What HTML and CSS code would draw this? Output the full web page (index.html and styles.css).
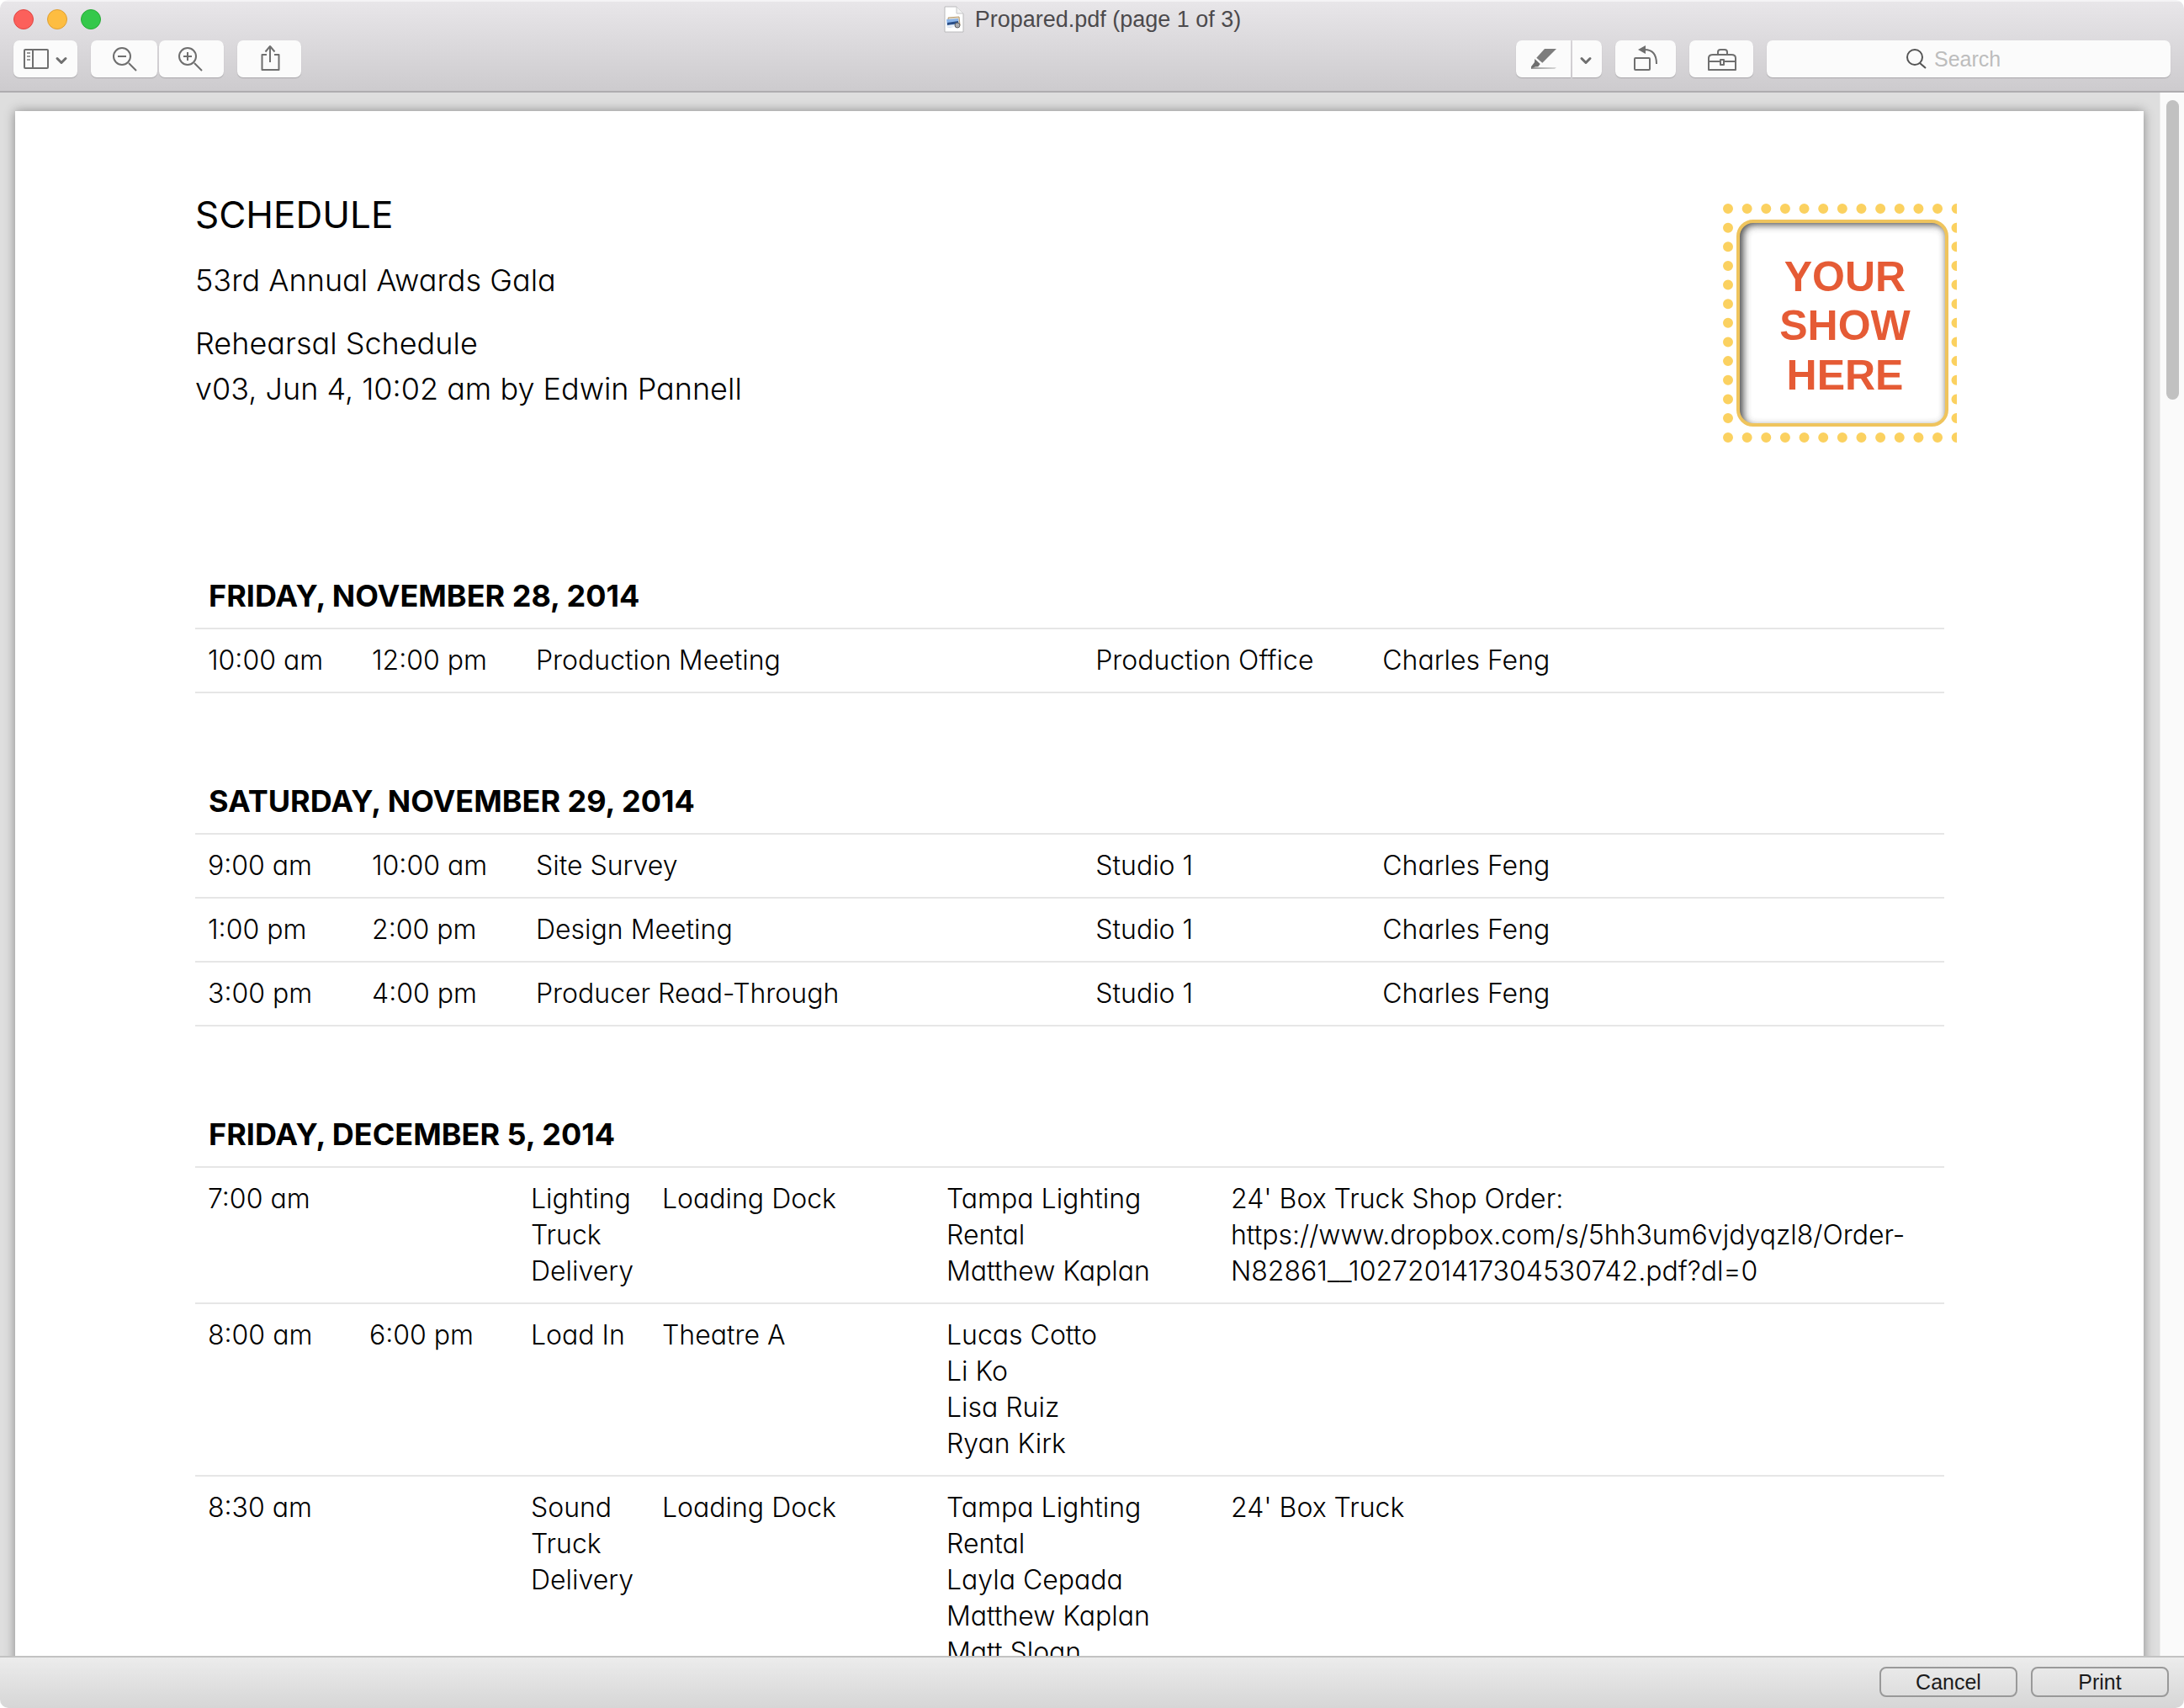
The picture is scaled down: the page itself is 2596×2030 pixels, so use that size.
FILE: index.html
```html
<!DOCTYPE html>
<html lang="en">
<head>
<meta charset="utf-8">
<title>Propared.pdf (page 1 of 3)</title>
<link rel="stylesheet" href="styles.css">
</head>
<body>
<div class="window">
  <header class="chrome">
    <div class="titlebar">
      <div class="lights">
        <button class="light light-close" aria-label="Close"></button>
        <button class="light light-minimize" aria-label="Minimize"></button>
        <button class="light light-zoom" aria-label="Zoom"></button>
      </div>
      <h1 class="title">
        <svg class="doc-icon" width="26" height="32" viewBox="0 0 26 32" aria-hidden="true">
          <path d="M2 1h14l8 8v22H2z" fill="#fff" stroke="#b9b9bb"/>
          <path d="M16 1v8h8" fill="#f3f3f3" stroke="#c4c4c6"/>
          <path d="M6 14l13-1 1 10-13 2z" fill="#e9dcc4" stroke="#b59a72"/>
          <path d="M4 16l14-1 1 9-14 2z" fill="#8ab4ea"/>
          <path d="M5 20l13-2v3l-13 2z" fill="#2a4d86"/>
          <path d="M5 23l9-1v3l-9 1z" fill="#e8eef5"/>
          <circle cx="17" cy="23" r="3" fill="#a9abb0" stroke="#5d5d60"/>
        </svg>
        <span>Propared.pdf (page 1 of 3)</span>
      </h1>
    </div>
    <div class="toolbar">
      <button class="tool" aria-label="View">
        <svg width="76" height="44" viewBox="0 0 76 44">
          <rect x="13" y="11" width="28" height="22" rx="1" class="line"/>
          <path d="M23 11v22" class="line"/>
          <path d="M16 15h4M16 19h4M16 23h4" class="line faint"/>
          <path d="M52 21.500l5 5 5-5" class="line heavy"/>
        </svg>
      </button>
      <div class="pair">
        <button class="tool" aria-label="Zoom out">
          <svg width="79" height="44" viewBox="0 0 79 44">
            <circle cx="37" cy="19" r="10" class="line"/>
            <path d="M32 19h10M45 27l9 9" class="line"/>
          </svg>
        </button>
        <button class="tool" aria-label="Zoom in">
          <svg width="77" height="44" viewBox="0 0 77 44">
            <circle cx="34" cy="19" r="10" class="line"/>
            <path d="M29 19h10M34 14v10M42 27l9 9" class="line"/>
          </svg>
        </button>
      </div>
      <button class="tool" aria-label="Share">
        <svg width="76" height="44" viewBox="0 0 76 44">
          <path d="M35 17h-5.500v18h20v-18h-5.500M39 26V8M33.500 13.500L39 7l5.500 6.500" class="line"/>
        </svg>
      </button>
      <div class="spacer"></div>
      <div class="split">
        <button class="tool" aria-label="Highlight">
          <svg width="65" height="44" viewBox="0 0 65 44">
            <defs><linearGradient id="fade"><stop offset="0" stop-color="#777"/><stop offset="1" stop-color="#ccc"/></linearGradient></defs>
            <path d="M34 10h14L31.300 26.700l-7-6z" fill="#7d7d7d"/>
            <path d="M22.300 22l6.400 6-2.400 3.300-3.600.2-4.700 2.200v-2.400l4-5.300z" fill="#6f6f6f"/>
            <path d="M18 32.300h30l-2 1.400H18z" fill="url(#fade)"/>
          </svg>
        </button>
        <button class="tool" aria-label="Highlight colours">
          <svg width="35" height="44" viewBox="0 0 35 44">
            <path d="M11 21.500l5 5 5-5" class="line heavy"/>
          </svg>
        </button>
      </div>
      <button class="tool" aria-label="Rotate left">
        <svg width="72" height="44" viewBox="0 0 72 44">
          <rect x="23" y="21" width="18" height="14" rx="1" class="line"/>
          <path d="M35 11c9 0 14 6 14 17" class="line"/>
          <path d="M36 6v10l-9-5z" fill="#6f6f6f"/>
        </svg>
      </button>
      <button class="tool" aria-label="Markup toolbox">
        <svg width="76" height="44" viewBox="0 0 76 44">
          <path d="M23 35V21q0-4 5-4h22q5 0 5 4v14zM34 17v-3q0-3 3-3h5q3 0 3 3v3M23 25h14M41 25h14M37 23h4v6h-4z" class="line"/>
        </svg>
      </button>
      <label class="search">
        <svg width="26" height="26" viewBox="0 0 26 26" aria-hidden="true">
          <circle cx="11" cy="11" r="9" class="line dark"/>
          <path d="M17 18l7 6" class="line dark"/>
        </svg>
        <input type="search" placeholder="Search" aria-label="Search">
      </label>
    </div>
  </header>

  <main class="viewer">
    <article class="sheet">
      <div class="masthead">
        <div class="intro">
          <h2 class="doc-title">SCHEDULE</h2>
          <p class="event">53rd Annual Awards Gala</p>
          <p class="version">Rehearsal Schedule<br>v03, Jun 4, 10:02 am by Edwin Pannell</p>
        </div>
        <svg class="logo" width="278" height="284" viewBox="0 0 278 284">
          <defs>
            <clipPath id="plate"><rect x="19" y="21" width="246" height="242" rx="17"/></clipPath>
            <filter id="soft" x="-20%" y="-20%" width="140%" height="140%"><feGaussianBlur stdDeviation="5"/></filter>
          </defs>
          <g fill="none" stroke="#fbd160" stroke-width="12" stroke-linecap="round" stroke-dasharray="0 22.640">
            <path d="M6 6H278M6 278H278M6 28.640V270M277.500 28.640V270"/>
          </g>
          <g clip-path="url(#plate)">
            <rect x="17" y="18" width="256" height="254" rx="20" fill="none" stroke="#444" stroke-width="14" filter="url(#soft)"/>
          </g>
          <rect x="18" y="21" width="248" height="242" rx="18" fill="none" stroke="#efc45d" stroke-width="4"/>
          <g class="logo-text" text-anchor="middle">
            <text x="145" y="104">YOUR</text>
            <text x="145" y="162">SHOW</text>
            <text x="145" y="221">HERE</text>
          </g>
        </svg>
      </div>

      <section class="day">
        <h3>FRIDAY, NOVEMBER 28, 2014</h3>
        <table class="brief">
          <colgroup><col class="b-time"><col class="b-time"><col class="b-what"><col class="b-where"><col></colgroup>
          <tbody>
            <tr><td>10:00 am</td><td>12:00 pm</td><td>Production Meeting</td><td>Production Office</td><td>Charles Feng</td></tr>
          </tbody>
        </table>
      </section>

      <section class="day">
        <h3>SATURDAY, NOVEMBER 29, 2014</h3>
        <table class="brief">
          <colgroup><col class="b-time"><col class="b-time"><col class="b-what"><col class="b-where"><col></colgroup>
          <tbody>
            <tr><td>9:00 am</td><td>10:00 am</td><td>Site Survey</td><td>Studio 1</td><td>Charles Feng</td></tr>
            <tr><td>1:00 pm</td><td>2:00 pm</td><td>Design Meeting</td><td>Studio 1</td><td>Charles Feng</td></tr>
            <tr><td>3:00 pm</td><td>4:00 pm</td><td>Producer Read-Through</td><td>Studio 1</td><td>Charles Feng</td></tr>
          </tbody>
        </table>
      </section>

      <section class="day">
        <h3>FRIDAY, DECEMBER 5, 2014</h3>
        <table class="full">
          <colgroup><col class="f-time"><col class="f-time"><col class="f-what"><col class="f-where"><col class="f-who"><col></colgroup>
          <tbody>
            <tr><td>7:00 am</td><td></td><td>Lighting<br>Truck<br>Delivery</td><td>Loading Dock</td><td>Tampa Lighting<br>Rental<br>Matthew Kaplan</td><td>24' Box Truck Shop Order:<br>https://www.dropbox.com/s/5hh3um6vjdyqzl8/Order-<br>N82861__1027201417304530742.pdf?dl=0</td></tr>
            <tr><td>8:00 am</td><td>6:00 pm</td><td>Load In</td><td>Theatre A</td><td>Lucas Cotto<br>Li Ko<br>Lisa Ruiz<br>Ryan Kirk</td><td></td></tr>
            <tr><td>8:30 am</td><td></td><td>Sound<br>Truck<br>Delivery</td><td>Loading Dock</td><td>Tampa Lighting<br>Rental<br>Layla Cepada<br>Matthew Kaplan<br>Matt Sloan</td><td>24' Box Truck</td></tr>
          </tbody>
        </table>
      </section>
    </article>
    <div class="scrollbar"><div class="thumb"></div></div>
  </main>

  <footer class="actions">
    <button class="push">Cancel</button>
    <button class="push">Print</button>
  </footer>
</div>
</body>
</html>
```
FILE: styles.css
```css
* { box-sizing: border-box; }

body {
  margin: 0;
  background: #fff;
  font-family: "Liberation Sans", Arial, sans-serif;
}

h1, h2, h3, p { margin: 0; font-weight: inherit; }

button { font: inherit; padding: 0; border: 0; }

.window {
  display: flex;
  flex-direction: column;
  height: 100vh;
  border-radius: 10px;
  overflow: hidden;
}

/* Title bar and toolbar */
.chrome {
  flex: none;
  background: linear-gradient(#e8e6e9, #cdcbce);
  border-top: 2px solid #f4f3f5;
  border-bottom: 2px solid #aeacaf;
}

.titlebar {
  display: grid;
  grid-template-columns: 1fr auto 1fr;
  align-items: center;
  height: 42px;
  padding: 0 16px;
}

.lights { display: flex; gap: 16px; }

.light { width: 24px; height: 24px; border-radius: 50%; }
.light-close { background: #fc605b; border: 1px solid #df4744; }
.light-minimize { background: #fdbd41; border: 1px solid #de9f34; }
.light-zoom { background: #34c84a; border: 1px solid #27aa35; }

.title {
  display: flex;
  align-items: center;
  gap: 12px;
  font-size: 27px;
  line-height: 32px;
  color: #4c4a4d;
}

.toolbar {
  display: flex;
  gap: 16px;
  padding: 4px 16px 16px;
}

.tool {
  height: 44px;
  border-radius: 7px;
  background: #fbfbfb;
  box-shadow: 0 1px 1px #a9a7aa;
}
.tool svg { display: block; }

.line { fill: none; stroke: #6f6f6f; stroke-width: 2; stroke-linejoin: round; }
.faint { stroke: #999; }
.heavy { stroke-width: 3; stroke-linecap: round; }
.dark { stroke: #555; }

.pair { display: flex; gap: 2px; }
.split { display: flex; gap: 2px; }
.split .tool:first-child { border-radius: 7px 0 0 7px; }
.split .tool:last-child { border-radius: 0 7px 7px 0; }
.spacer { flex: 1; }

.search {
  display: flex;
  align-items: center;
  gap: 8px;
  width: 480px;
  height: 44px;
  padding-left: 165px;
  border-radius: 7px;
  background: #fbfbfb;
  box-shadow: 0 1px 1px #a9a7aa;
}
.search svg { flex: none; }
.search input {
  flex: 1;
  min-width: 0;
  padding: 0;
  border: 0;
  background: none;
  font: inherit;
  font-size: 25px;
}
.search input::placeholder { color: #bdbdbd; opacity: 1; }

/* Document area */
.viewer {
  flex: 1;
  display: flex;
  min-height: 0;
  overflow: hidden;
  background: #dedede;
}

.sheet {
  flex: 1;
  margin: 22px 19px 0 18px;
  padding: 90px 222px 0 214px;
  height: max-content;
  background: #fff;
  box-shadow: 0 0 12px #888;
  color: #000;
  font-family: Inter, "Noto Sans", sans-serif;
  font-feature-settings: "cv11";
  font-size: 32px;
  font-weight: 300;
  line-height: 43px;
}

.masthead {
  display: flex;
  justify-content: space-between;
  align-items: flex-start;
  padding-top: 20px;
  height: 449px;
}

.doc-title { margin-top: -14px; padding-bottom: 24px; font-size: 44px; font-weight: 400; line-height: 54px; }
.event, .version { font-size: 36px; line-height: 54px; }
.event { padding-bottom: 21px; }

.logo-text {
  font: bold 50px "Liberation Sans", Arial, sans-serif;
  fill: #e55b35;
}

.day { margin-right: 15px; padding-bottom: 91px; }

.day h3 {
  padding: 16px;
  border-bottom: 2px solid #e6e6e6;
  font-size: 36px;
  font-weight: 700;
}

table { width: 100%; table-layout: fixed; border-collapse: separate; border-spacing: 0; }
td {
  padding: 15px 0 16px 15px;
  border-bottom: 2px solid #e6e6e6;
  vertical-align: top;
  white-space: nowrap;
}

.b-time { width: 195px; }
.b-what { width: 32%; }
.b-where { width: 341px; }
.f-time { width: 192px; }
.f-what { width: 156px; }
.f-where, .f-who { width: 338px; }

.scrollbar {
  width: 29px;
  padding: 9px 6px 0 7px;
  border-left: 1px solid #ececec;
  background: #fafafa;
}
.thumb { height: 356px; border-radius: 8px; background: #c1c1c1; }

/* Bottom bar */
.actions {
  flex: none;
  display: flex;
  justify-content: flex-end;
  gap: 16px;
  padding: 11px 18px 13px;
  border-top: 2px solid #c2c2c2;
  background: linear-gradient(#ececec, #d6d6d6);
}

.push {
  width: 164px;
  height: 36px;
  border: 2px solid #999;
  border-radius: 8px;
  background: linear-gradient(#e9e9e9, #dedede);
  font-size: 25px;
  line-height: 30px;
  color: #1c1c1c;
}
```
